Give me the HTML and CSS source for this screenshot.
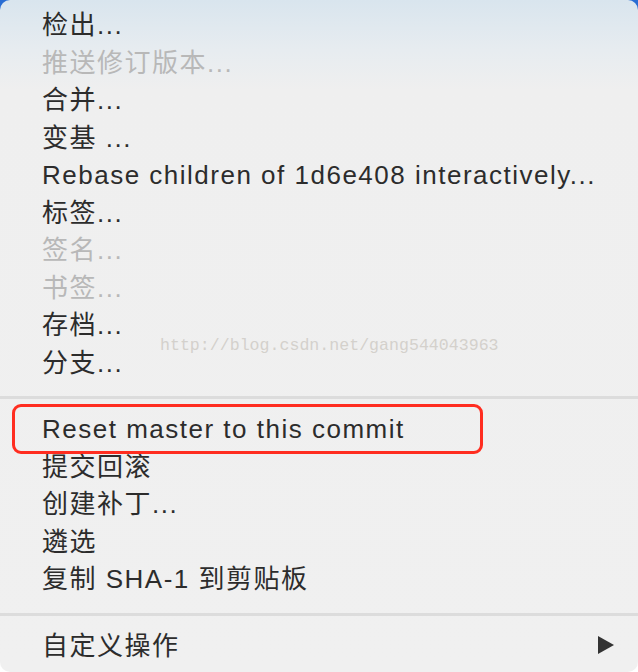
FILE: index.html
```html
<html>
	<head>
	<link rel="stylesheet" href="styles.css">
	</head>
	<body>
		<div class="menu">
			<div class="item">检出...</div>
			<div class="item disabled">推送修订版本...</div>
			<div class="item">合并...</div>
			<div class="item">变基 ...</div>
			<div class="item">Rebase children of 1d6e408 interactively...</div>
			<div class="item">标签...</div>
			<div class="item disabled">签名...</div>
			<div class="item disabled">书签...</div>
			<div class="item">存档...</div>
			<div class="item">分支...</div>
			<div class="sep"></div>
			<div class="item marked">Reset master to this commit<span class="mark"></span></div>
			<div class="item">提交回滚</div>
			<div class="item">创建补丁...</div>
			<div class="item">遴选</div>
			<div class="item">复制 SHA-1 到剪贴板</div>
			<div class="sep"></div>
			<div class="item sub">自定义操作<span class="arrow"></span></div>
			<div class="watermark">http://blog.csdn.net/gang544043963</div>
		</div>
	</body>
</html>
```

FILE: styles.css
```css
*{
	margin:0px;
	padding:0px;
}
body{
	width: 638px;
	height: 672px;
	overflow: hidden;
	background: linear-gradient(#2a6dd3 0%, #2a6dd3 50%, #e4e4e4 50%, #ffffff 100%);
}
.menu{
	position: relative;
	height: 672px;
	box-sizing: border-box;
	padding: 7px 0px 8px;
	border-radius: 10px;
	background: linear-gradient(#d9e5ee 0px, #e7ecf0 50px, #efefef 90px, #f0f0f0 100%);
	font-family: "Liberation Sans", "Noto Sans CJK SC", sans-serif;
	font-size: 26px;
	letter-spacing: 1.5px;
	color: #2c2c2c;
}
.item{
	height: 37.5px;
	line-height: 37.5px;
	padding-left: 42px;
	white-space: nowrap;
}
.disabled{
	color: #b8b8b8;
}
.sep{
	height: 29px;
	box-sizing: border-box;
	padding-top: 2px;
	display: flex;
	align-items: center;
}
.sep::after{
	content: "";
	display: block;
	width: 100%;
	height: 3px;
	background: #dcdcdc;
}
.marked{
	position: relative;
}
.mark{
	position: absolute;
	left: 12px;
	top: -7px;
	width: 471px;
	height: 50px;
	box-sizing: border-box;
	border: 3px solid #ff2d20;
	border-radius: 9px;
}
.sub{
	position: relative;
}
.arrow{
	position: absolute;
	right: 24px;
	top: 8px;
	width: 0px;
	height: 0px;
	border-top: 9.5px solid transparent;
	border-bottom: 9.5px solid transparent;
	border-left: 16px solid #333333;
}
.watermark{
	position: absolute;
	left: 160px;
	top: 336px;
	font-family: "Liberation Mono", monospace;
	font-size: 16.6px;
	letter-spacing: 0px;
	color: #d4d1cc;
}
```
